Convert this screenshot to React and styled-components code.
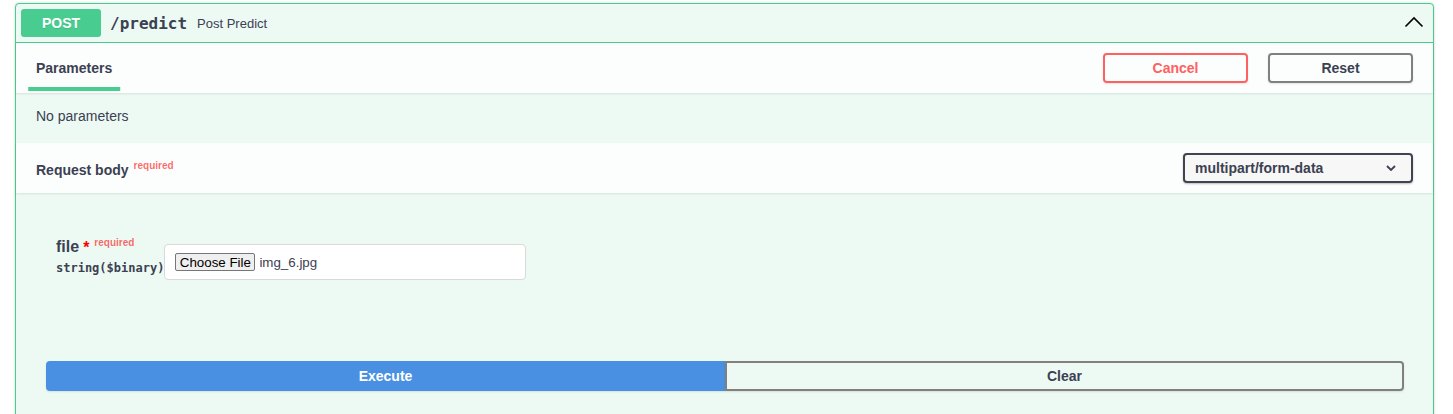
import React from 'react';
import styled, { createGlobalStyle } from 'styled-components';

const GlobalStyle = createGlobalStyle`
  html, body {
    margin: 0;
    padding: 0;
    background: #fff;
    font-family: "Liberation Sans", Arial, sans-serif;
    color: #3b4151;
    overflow: hidden;
  }
`;

const Page = styled.div`
  padding: 3px 19px 0 15px;
`;

const Block = styled.div`
  border: 1px solid #49cc90;
  border-radius: 4px;
  background: #edfaf4;
  box-shadow: 0 0 3px rgba(0, 0, 0, 0.19);
`;

const Summary = styled.div`
  display: flex;
  align-items: center;
  padding: 5px;
  border-bottom: 1px solid #49cc90;
`;

const Method = styled.span`
  width: 80px;
  height: 28px;
  display: flex;
  align-items: center;
  justify-content: center;
  border-radius: 3px;
  background: #49cc90;
  color: #fff;
  font-size: 14px;
  font-weight: 700;
  text-shadow: 0 1px 0 rgba(0, 0, 0, 0.1);
`;

const Path = styled.span`
  padding: 0 10px 0 9px;
  font-family: "DejaVu Sans Mono", monospace;
  font-size: 16px;
  font-weight: 700;
  color: #3b4151;
`;

const Description = styled.span`
  flex: 1;
  font-size: 13px;
  color: #3b4151;
`;

const Arrow = styled.svg`
  margin-right: 4px;
`;

const SectionHeader = styled.div`
  display: flex;
  align-items: center;
  justify-content: space-between;
  min-height: 50px;
  box-sizing: border-box;
  padding: 0 20px;
  background: rgba(255, 255, 255, 0.8);
  box-shadow: 0 1px 2px rgba(0, 0, 0, 0.1);
`;

const Title = styled.h4`
  margin: 0;
  font-size: 14px;
  font-weight: 700;
  color: #3b4151;
  line-height: 17px;
`;

const TabLabel = styled.span`
  position: relative;

  &::after {
    content: '';
    position: absolute;
    bottom: -15px;
    left: 50%;
    width: 120%;
    height: 4px;
    transform: translateX(-50%);
    background: #49cc90;
  }
`;

const Sup = styled.sup`
  margin-left: 5px;
  font-size: 10px;
  font-weight: 700;
  color: rgba(255, 0, 0, 0.6);
`;

const Actions = styled.div`
  display: flex;
  gap: 20px;
`;

const OutlineButton = styled.button`
  width: 145px;
  height: 30px;
  box-sizing: border-box;
  border: 2px solid ${(p) => p.$color};
  border-radius: 4px;
  background: transparent;
  color: ${(p) => (p.$danger ? p.$color : '#3b4151')};
  font-family: inherit;
  font-size: 14px;
  font-weight: 700;
  box-shadow: 0 1px 2px rgba(0, 0, 0, 0.1);
  cursor: pointer;
`;

const Notice = styled.div`
  padding: 15px 20px 19px;
  font-size: 14px;
  line-height: 16px;
`;

const Select = styled.div`
  width: 230px;
  height: 30px;
  box-sizing: border-box;
  display: flex;
  align-items: center;
  justify-content: space-between;
  padding: 0 15px 0 10px;
  border: 2px solid #41444e;
  border-radius: 4px;
  background: #f7f7f7;
  box-shadow: 0 1px 2px 0 rgba(0, 0, 0, 0.25);
  font-size: 14px;
  font-weight: 700;
  color: #3b4151;
`;

const Body = styled.div`
  padding: 44px 20px 0 40px;
`;

const ParamRow = styled.div`
  display: flex;
  align-items: flex-start;
`;

const ParamLabel = styled.div`
  display: flex;
  flex-direction: column;
`;

const ParamName = styled.div`
  display: flex;
  align-items: flex-start;
  height: 20px;
  line-height: 20px;
  font-size: 16px;
  font-weight: 700;
`;

const Star = styled.span`
  margin-left: 4px;
  color: red;
  font-size: 16px;
  line-height: 22px;
`;

const ParamRequired = styled.span`
  margin-left: 5px;
  color: rgba(255, 0, 0, 0.6);
  font-size: 10px;
  line-height: 12px;
`;

const ParamType = styled.div`
  margin-top: 1px;
  line-height: 20px;
  font-family: "DejaVu Sans Mono", monospace;
  font-size: 12px;
  font-weight: 700;
`;

const FileInput = styled.div`
  margin-top: 7px;
  width: 362px;
  height: 36px;
  box-sizing: border-box;
  display: flex;
  align-items: center;
  gap: 4px;
  padding: 0 10px;
  border: 1px solid #d9d9d9;
  border-radius: 4px;
  background: #fff;
  font-family: "Liberation Sans", Arial, sans-serif;
  font-size: 13.33px;
  color: #3b4151;
`;

const NativeButton = styled.span`
  width: 80px;
  height: 18px;
  box-sizing: border-box;
  display: flex;
  align-items: center;
  justify-content: center;
  border: 1px solid #767676;
  border-radius: 2px;
  background: #efefef;
  color: #000;
  font-size: 13.33px;
`;

const ExecuteWrapper = styled.div`
  display: flex;
  padding: 81px 29px 30px 30px;
`;

const WideButton = styled.button`
  flex: 1;
  height: 30px;
  box-sizing: border-box;
  border: 2px solid ${(p) => (p.$primary ? '#4990e2' : 'gray')};
  border-radius: ${(p) => (p.$primary ? '4px 0 0 4px' : '0 4px 4px 0')};
  background: ${(p) => (p.$primary ? '#4990e2' : 'transparent')};
  color: ${(p) => (p.$primary ? '#fff' : '#3b4151')};
  font-family: inherit;
  font-size: 14px;
  font-weight: 700;
  box-shadow: 0 1px 2px rgba(0, 0, 0, 0.1);
  cursor: pointer;
`;

export default function App() {
  return (
    <>
      <GlobalStyle />
      <Page>
        <Block>
          <Summary>
            <Method>POST</Method>
            <Path>/predict</Path>
            <Description>Post Predict</Description>
            <Arrow width="20" height="20" viewBox="0 0 20 20">
              <path d="M1.5 13.5 L10 5 L18.5 13.5" fill="none" stroke="#000" strokeWidth="1.6" />
            </Arrow>
          </Summary>

          <SectionHeader>
            <Title>
              <TabLabel>Parameters</TabLabel>
            </Title>
            <Actions>
              <OutlineButton $color="#ff6060" $danger>Cancel</OutlineButton>
              <OutlineButton $color="gray">Reset</OutlineButton>
            </Actions>
          </SectionHeader>

          <Notice>No parameters</Notice>

          <SectionHeader>
            <Title>
              Request body<Sup>required</Sup>
            </Title>
            <Select>
              multipart/form-data
              <svg width="10" height="6" viewBox="0 0 10 6">
                <path d="M1 1 L5 5 L9 1" fill="none" stroke="#3b4151" strokeWidth="1.8" />
              </svg>
            </Select>
          </SectionHeader>

          <Body>
            <ParamRow>
              <ParamLabel>
                <ParamName>
                  file<Star>*</Star>
                  <ParamRequired>required</ParamRequired>
                </ParamName>
                <ParamType>string($binary)</ParamType>
              </ParamLabel>
              <FileInput>
                <NativeButton>Choose File</NativeButton>
                img_6.jpg
              </FileInput>
            </ParamRow>
          </Body>

          <ExecuteWrapper>
            <WideButton $primary>Execute</WideButton>
            <WideButton>Clear</WideButton>
          </ExecuteWrapper>
        </Block>
      </Page>
    </>
  );
}
